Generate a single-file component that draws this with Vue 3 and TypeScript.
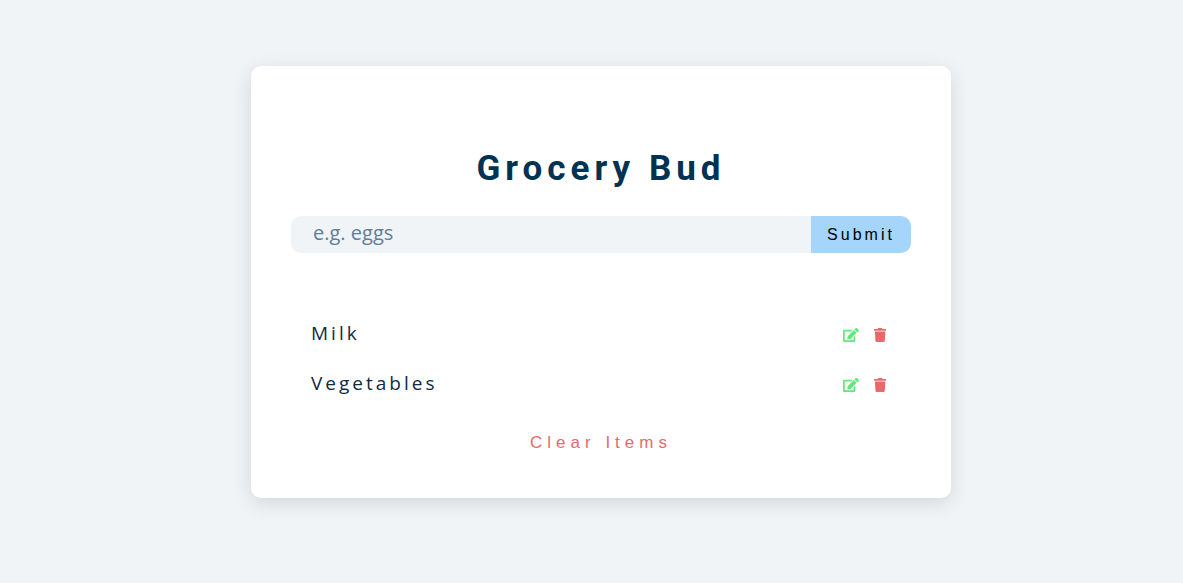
<script setup lang="ts">
import { ref } from 'vue'

interface Grocery {
  id: number
  title: string
}

const name = ref('')
const editId = ref<number | null>(null)
const items = ref<Grocery[]>([
  { id: 1, title: 'Milk' },
  { id: 2, title: 'Vegetables' },
])

function submit() {
  const title = name.value.trim()
  if (!title) return
  const current = items.value.find((item) => item.id === editId.value)
  if (current) current.title = title
  else items.value.push({ id: Date.now(), title })
  name.value = ''
  editId.value = null
}

function edit(item: Grocery) {
  editId.value = item.id
  name.value = item.title
}

function remove(id: number) {
  items.value = items.value.filter((item) => item.id !== id)
}
</script>

<template>
  <main class="page">
    <section class="card">
      <form @submit.prevent="submit">
        <h1>Grocery Bud</h1>
        <div class="control">
          <input v-model="name" type="text" placeholder="e.g. eggs" aria-label="Grocery item" />
          <button type="submit" class="submit">Submit</button>
        </div>
      </form>
      <div v-if="items.length" class="container">
        <ul>
          <li v-for="item in items" :key="item.id">
            <span class="title">{{ item.title }}</span>
            <div class="actions">
              <button type="button" class="edit" :aria-label="`Edit ${item.title}`" @click="edit(item)">
                <svg viewBox="0 0 576 512" aria-hidden="true">
                  <path d="M402.6 83.2l90.2 90.2c3.8 3.8 3.8 10 0 13.8L274.4 405.6l-92.8 10.3c-12.4 1.4-22.9-9.1-21.5-21.5l10.3-92.8L388.8 83.2c3.8-3.8 10-3.8 13.8 0zm162-22.9l-48.8-48.8c-15.2-15.2-39.9-15.2-55.2 0l-35.4 35.4c-3.8 3.8-3.8 10 0 13.8l90.2 90.2c3.8 3.8 10 3.8 13.8 0l35.4-35.4c15.2-15.3 15.2-40 0-55.2zM384 346.2V448H64V128h229.8c3.2 0 6.2-1.3 8.5-3.5l40-40c7.6-7.6 2.2-20.5-8.5-20.5H48C21.5 64 0 85.5 0 112v352c0 26.5 21.5 48 48 48h352c26.5 0 48-21.5 48-48V306.2c0-10.7-12.9-16-20.5-8.5l-40 40c-2.2 2.3-3.5 5.3-3.5 8.5z" />
                </svg>
              </button>
              <button type="button" class="delete" :aria-label="`Delete ${item.title}`" @click="remove(item.id)">
                <svg viewBox="0 0 448 512" aria-hidden="true">
                  <path d="M432 32H312l-9.4-18.7A24 24 0 0 0 281.1 0H166.8a23.72 23.72 0 0 0-21.4 13.3L136 32H16A16 16 0 0 0 0 48v32a16 16 0 0 0 16 16h416a16 16 0 0 0 16-16V48a16 16 0 0 0-16-16zM53.2 467a48 48 0 0 0 47.9 45h245.8a48 48 0 0 0 47.9-45L416 128H32z" />
                </svg>
              </button>
            </div>
          </li>
        </ul>
        <button type="button" class="clear" @click="items = []">Clear Items</button>
      </div>
    </section>
  </main>
</template>

<style>
body {
  margin: 0;
  background: #f0f4f7;
}
</style>

<style scoped>
* {
  box-sizing: border-box;
}

.page {
  padding: 66px 0 66px 19px;
  font-family: "Open Sans", "Liberation Sans", sans-serif;
  color: #102a42;
}

.card {
  max-width: 700px;
  margin: 0 auto;
  padding: 80px 40px 45px;
  background: #fff;
  border-radius: 10px;
  box-shadow: 0 5px 20px rgba(0, 0, 0, 0.12);
}

h1 {
  margin: 0 0 24px;
  font: 700 35px/46px Roboto, sans-serif;
  letter-spacing: 5px;
  text-align: center;
  color: #003251;
}

.control {
  display: flex;
  height: 37px;
  margin-top: 24px;
  border-radius: 10px;
  overflow: hidden;
}

button {
  margin: 0;
  padding: 0;
  border: 0;
  background: transparent;
  cursor: pointer;
}

input {
  flex: 1;
  min-width: 0;
  margin: 0;
  padding: 0 22px 3px;
  border: 0;
  outline: 0;
  background: #f0f4f7;
  color: #102a42;
  font: 400 20px/28px "Open Sans", sans-serif;
}

input::placeholder {
  color: #617d98;
  opacity: 1;
}

.submit {
  width: 100px;
  background: #a5d5fa;
  color: #000;
  font: 400 16px/20px "Liberation Sans", Arial, sans-serif;
  letter-spacing: 3px;
}

.container {
  display: flex;
  flex-direction: column;
  align-items: center;
  margin-top: 60px;
}

ul {
  align-self: stretch;
  margin: 0;
  padding: 0;
  list-style: none;
}

li {
  display: flex;
  justify-content: space-between;
  height: 40px;
  margin-bottom: 10px;
  padding: 0 25px 0 20px;
}

.title {
  font-size: 19px;
  line-height: 40px;
  letter-spacing: 3px;
}

.actions {
  display: flex;
  align-items: center;
  gap: 15px;
  padding-top: 4px;
}

.actions button {
  display: flex;
}

svg {
  display: block;
  height: 14px;
  fill: currentColor;
}

.edit {
  color: #5fe97a;
}

.delete {
  color: #e66a6a;
}

.clear {
  margin-top: 20px;
  color: #e66a6a;
  font: 400 17px/20px "Liberation Sans", Arial, sans-serif;
  letter-spacing: 5px;
}
</style>
